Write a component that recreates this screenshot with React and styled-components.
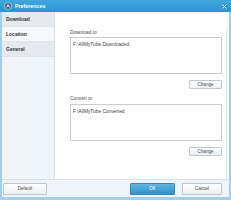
import React from "react";
import styled, { createGlobalStyle } from "styled-components";

const Global = createGlobalStyle`
  html, body { margin: 0; padding: 0; background: #ffffff; }
  body { font-family: "Liberation Sans", Arial, sans-serif; }
  * { box-sizing: border-box; }
`;

const Window = styled.div`
  width: 231px;
  height: 200px;
  display: flex;
  flex-direction: column;
  background: #a3cfe9;
  overflow: hidden;
`;

const TitleBar = styled.div`
  height: 12px;
  flex: none;
  display: flex;
  align-items: center;
  padding: 0 4px 0 4px;
  background: linear-gradient(#3ea8dd, #2d95cf);
  color: #ffffff;
`;

const TitleText = styled.span`
  font-size: 5.3px;
  font-weight: bold;
  line-height: 6px;
  margin-left: 3px;
  flex: 1;
`;

const Body = styled.div`
  flex: 1;
  display: flex;
  margin: 0 2px;
  min-height: 0;
`;

const Sidebar = styled.div`
  width: 53px;
  flex: none;
  background: #f0f5fa;
  border-right: 1px solid #d8dfe6;
  display: flex;
  flex-direction: column;
`;

const NavItem = styled.div`
  height: 15px;
  display: flex;
  align-items: center;
  padding-left: 4px;
  font-size: 5px;
  font-weight: bold;
  color: #333333;
  background: ${(p) => (p.$shade ? "#e6eaee" : "#f6f8fb")};
  border-bottom: 1px solid #dfe4ea;
`;

const Content = styled.div`
  flex: 1;
  background: #ffffff;
  padding: 17px 2px 0 0;
  display: flex;
`;

const Panel = styled.div`
  flex: 1;
  border-right: 1px solid #e4e8ec;
  padding: 1px 4px 0 15px;
  display: flex;
  flex-direction: column;
`;

const Label = styled.div`
  font-size: 4.8px;
  line-height: 6px;
  color: #4a4a4a;
  margin-top: ${(p) => p.$top || 0}px;
`;

const PathBox = styled.div`
  height: 37px;
  margin-top: ${(p) => p.$top || 0}px;
  border: 1px solid #c9cdd2;
  background: #ffffff;
  padding: 4px 2px 0 2px;
  font-size: 4.8px;
  line-height: 6px;
  color: #444444;
`;

const ButtonRow = styled.div`
  display: flex;
  justify-content: flex-end;
  margin-top: 6px;
`;

const Button = styled.div`
  width: ${(p) => p.$w}px;
  height: ${(p) => p.$h || 9}px;
  display: flex;
  align-items: center;
  justify-content: center;
  font-size: 4.6px;
  border-radius: 1px;
  color: ${(p) => (p.$primary ? "#ffffff" : "#4a4a4a")};
  border: 1px solid ${(p) => (p.$primary ? "#3289c0" : "#bcc7d1")};
  background: ${(p) =>
    p.$primary
      ? "linear-gradient(#62b5e0, #3190c9)"
      : "linear-gradient(#ffffff, #ebeff3)"};
`;

const Footer = styled.div`
  height: 18px;
  flex: none;
  margin: 0 2px 3px 2px;
  background: #eef4f9;
  border-top: 1px solid #d6dee6;
  display: flex;
  align-items: center;
  padding: 0 7px 0 1px;
  gap: 7px;
`;

const Spacer = styled.div`
  flex: 1;
`;

const AppIcon = () => (
  <svg width="8" height="8" viewBox="0 0 8 8">
    <circle cx="4" cy="4" r="3.5" fill="#3b5878" stroke="#bcd6e8" strokeWidth="0.8" />
    <path d="M2.3 5.6 L4 2.3 L5.7 5.6 M3 4.5 H5" stroke="#ffffff" strokeWidth="0.7" fill="none" />
  </svg>
);

const CloseIcon = () => (
  <svg width="5" height="5" viewBox="0 0 5 5">
    <path d="M0.6 0.6 L4.4 4.4 M4.4 0.6 L0.6 4.4" stroke="#ffffff" strokeWidth="0.9" />
  </svg>
);

export default function App() {
  return (
    <>
      <Global />
      <Window>
        <TitleBar>
          <AppIcon />
          <TitleText>Preferences</TitleText>
          <CloseIcon />
        </TitleBar>
        <Body>
          <Sidebar>
            <NavItem $shade>Download</NavItem>
            <NavItem>Location</NavItem>
            <NavItem $shade>General</NavItem>
          </Sidebar>
          <Content>
            <Panel>
              <Label>Download to</Label>
              <PathBox $top={1}>F:\AllMyTube Downloaded</PathBox>
              <ButtonRow>
                <Button $w={33}>Change</Button>
              </ButtonRow>
              <Label $top={7}>Convert to</Label>
              <PathBox $top={2}>F:\AllMyTube Converted</PathBox>
              <ButtonRow>
                <Button $w={33}>Change</Button>
              </ButtonRow>
            </Panel>
          </Content>
        </Body>
        <Footer>
          <Button $w={44} $h={12}>Default</Button>
          <Spacer />
          <Button $w={45} $h={12} $primary>OK</Button>
          <Button $w={40} $h={12}>Cancel</Button>
        </Footer>
      </Window>
    </>
  );
}
